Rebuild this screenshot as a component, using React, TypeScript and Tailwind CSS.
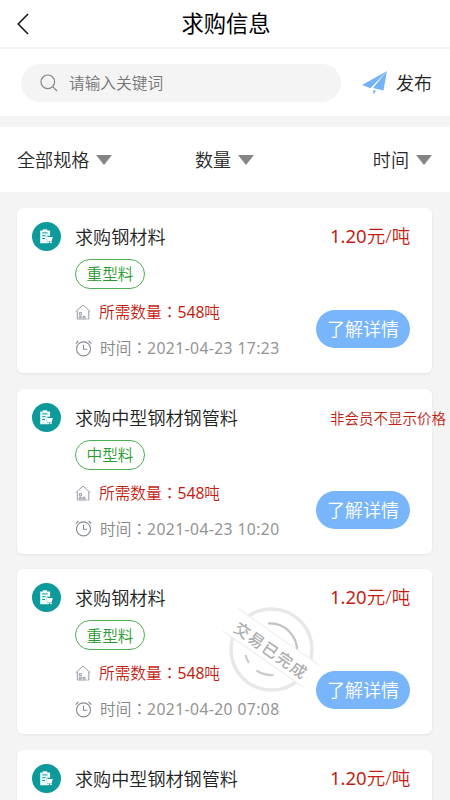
type Purchase = {
    id: number;
    title: string;
    tag: string;
    amount: string;
    time: string;
    price?: string;
    done?: boolean;
};

const purchases: Purchase[] = [
    { id: 1, title: '求购钢材料', tag: '重型料', amount: '548', time: '2021-04-23 17:23', price: '1.20' },
    { id: 2, title: '求购中型钢材钢管料', tag: '中型料', amount: '548', time: '2021-04-23 10:20' },
    { id: 3, title: '求购钢材料', tag: '重型料', amount: '548', time: '2021-04-20 07:08', price: '1.20', done: true },
    { id: 4, title: '求购中型钢材钢管料', tag: '中型料', amount: '548', time: '2021-04-20 07:08', price: '1.20' },
];

const filters = ['全部规格', '数量', '时间'];

function Colon() {
    return <span className="font-['Noto_Sans_CJK_TC',sans-serif]" lang="zh-TW">：</span>;
}

function ClipboardIcon() {
    return (
        <svg viewBox="0 0 29 29" className="h-[29px] w-[29px] shrink-0">
            <circle cx="14.5" cy="14.5" r="14.5" fill="#0e9a9b" />
            <path d="M8.2 8.4h2.6V7.3h4.4v1.1h2.9v5.4h-2.6l-1.5.2 1.2 5.2.9 2H8.2z" fill="#eefafa" />
            <path d="M10.2 10.9h5.4M10.2 13.7h3.4M10.2 16.5h2.8" stroke="#0e9a9b" strokeWidth="1" />
            <path d="M13.8 14.2h1.5l.5.9h5l-1.3 4.3h-4z" fill="#fff" />
            <circle cx="16.3" cy="20.3" r=".9" fill="#fff" />
            <circle cx="19" cy="20.3" r=".9" fill="#fff" />
        </svg>
    );
}

function HouseIcon() {
    return (
        <svg viewBox="0 0 16 16" className="h-4 w-4 shrink-0" fill="none" stroke="#969ba8" strokeWidth="1">
            <path d="M.7 7.7 8 1l7.3 6.7M2.3 7v8h9.5M13.8 7v8h-1.3" />
            <path d="M4.3 8.6h2.2v2.2H4.3zM4.3 12.2h2v1.6h-2zM8 12.2h2v1.6H8z" />
        </svg>
    );
}

function ClockIcon() {
    return (
        <svg viewBox="0 0 17 17" className="h-[17px] w-[17px] shrink-0" fill="none" stroke="#858b94" strokeWidth="1.1">
            <circle cx="8.5" cy="8.9" r="7" />
            <path d="M8.5 4.8v4.5h3.7M.7 3.6 3.4 1M16.3 3.6 13.6 1" />
        </svg>
    );
}

function DoneStamp() {
    return (
        <svg viewBox="0 0 100 100" className="absolute top-[34px] left-[205px] h-[100px] w-[100px] overflow-visible" fill="none">
            <circle cx="49.5" cy="46.5" r="40.5" stroke="#e8e8e8" strokeWidth="3.5" />
            <path d="M46 20.5A27 27 0 0 1 75 49" stroke="#c2c2c2" strokeWidth="2.2" />
            <path d="M23.5 52a27 27 0 0 0 3.5 8M34.5 67.5a27 27 0 0 0 17 4.5" stroke="#cbcbcb" strokeWidth="2.2" />
            <g transform="rotate(35 49 45)">
                <path d="M0 31.5h98v27H0z" fill="#fff" />
                <path d="M0 31.5h98M0 58.5h98" stroke="#eee" strokeWidth="1.2" />
                <text x="50.5" y="53" textAnchor="middle" fontSize="15.8" letterSpacing="1.4" fontWeight="500" fill="#adadad">
                    交易已完成
                </text>
            </g>
        </svg>
    );
}

function PurchaseCard({ item }: { item: Purchase }) {
    return (
        <div className="relative flex h-[165px] shrink-0 rounded-md bg-white pt-[14px] pr-[22px] pl-[15px] shadow-[0_1px_3px_rgba(0,0,0,0.07)]">
            <ClipboardIcon />
            <div className="ml-[14px] flex flex-1 flex-col items-start">
                <h2 className="h-[29px] text-[18.1px] leading-[31px] whitespace-nowrap text-[#222]">{item.title}</h2>
                <span className="mt-[8px] flex h-[30px] w-[70px] items-center justify-center rounded-full border border-[#4eae53] pt-[2px] text-[15.7px] leading-none text-[#2b9a31]">
                    {item.tag}
                </span>
                <div className="mt-[11px] flex h-6 items-center gap-2 text-[15.7px] leading-6 whitespace-nowrap text-[#c41e14]">
                    <HouseIcon />
                    <span>所需数量<Colon /><span className="font-normal">{item.amount}</span>吨</span>
                </div>
                <div className="mt-[12px] flex h-6 items-center gap-2 text-[15.7px] leading-6 whitespace-nowrap text-[#858585]">
                    <ClockIcon />
                    <span>时间<Colon /><span className="font-normal tracking-[0.4px] text-[#949494]">{item.time}</span></span>
                </div>
            </div>
            {item.done && <DoneStamp />}
            <div className="relative flex w-[94px] shrink-0 flex-col">
                {item.price ? (
                    <p className="ml-[14px] h-[29px] text-[18.5px] leading-[28px] whitespace-nowrap text-[#c41e14]">
                        <span className="font-normal">{item.price}</span>元/吨
                    </p>
                ) : (
                    <p className="ml-[14px] h-[29px] text-[14.5px] leading-[30px] whitespace-nowrap text-[#c41e14]">非会员不显示价格</p>
                )}
                <button className="mt-[59px] h-[38px] w-[94px] rounded-full bg-[#79b5fb] text-[18px] leading-[38px] whitespace-nowrap text-white">
                    了解详情
                </button>
            </div>
        </div>
    );
}

export default function App() {
    return (
        <div className="flex h-[800px] w-[450px] flex-col overflow-hidden bg-[#f4f4f4] font-['Noto_Sans','Noto_Sans_CJK_SC',sans-serif] font-[350]" lang="zh-CN">
            <header className="grid h-[47px] shrink-0 grid-cols-[60px_1fr_60px] items-center bg-white">
                <svg viewBox="0 0 12 22" className="ml-[17px] h-[22px] w-3" fill="none" stroke="#111" strokeWidth="1.5">
                    <path d="M11 1 1.2 11 11 21" />
                </svg>
                <h1 className="pl-[2px] text-center text-[22.3px] leading-[47px] font-normal text-black">求购信息</h1>
            </header>

            <div className="mt-[2px] flex h-[67px] shrink-0 items-center bg-white pr-[17px] pl-[21px]">
                <div className="flex h-[38px] w-[320px] items-center rounded-full bg-[#f4f4f4] pl-[19px]">
                    <svg viewBox="0 0 18 18" className="h-[18px] w-[18px]" fill="none" stroke="#858585" strokeWidth="1.2">
                        <circle cx="7.8" cy="7.8" r="6.8" />
                        <path d="m12.7 12.7 4.3 4.3" />
                    </svg>
                    <span className="ml-[11px] text-[15.7px] leading-6 text-[#757575]">请输入关键词</span>
                </div>
                <svg viewBox="0 0 26 24" className="ml-[21px] h-6 w-[26px]" fill="#76b2f7">
                    <path d="M0 14 25 0 8.5 17.2z" />
                    <path d="M25 0 21.5 19.5l-10.5-2.5z" />
                    <path d="m11 19 3 .8-2.5 3.5z" />
                </svg>
                <span className="ml-[8px] text-[18px] leading-7 whitespace-nowrap text-[#222]">发布</span>
            </div>

            <nav className="mt-[11px] grid h-[65px] shrink-0 grid-cols-[1fr_auto_1fr] items-center bg-white pr-[18px] pl-[17px]">
                {filters.map((name) => (
                    <div key={name} className="flex items-center gap-[7px] text-[18.1px] leading-7 text-[#282828] last:justify-self-end">
                        {name}
                        <svg viewBox="0 0 16 10" className="h-[10px] w-4" fill="#858585">
                            <path d="M0 0h16L8 10z" />
                        </svg>
                    </div>
                ))}
            </nav>

            <main className="flex flex-col gap-[15.7px] pt-4 pr-[18px] pl-[17px]">
                {purchases.map((item) => (
                    <PurchaseCard key={item.id} item={item} />
                ))}
            </main>
        </div>
    );
}
